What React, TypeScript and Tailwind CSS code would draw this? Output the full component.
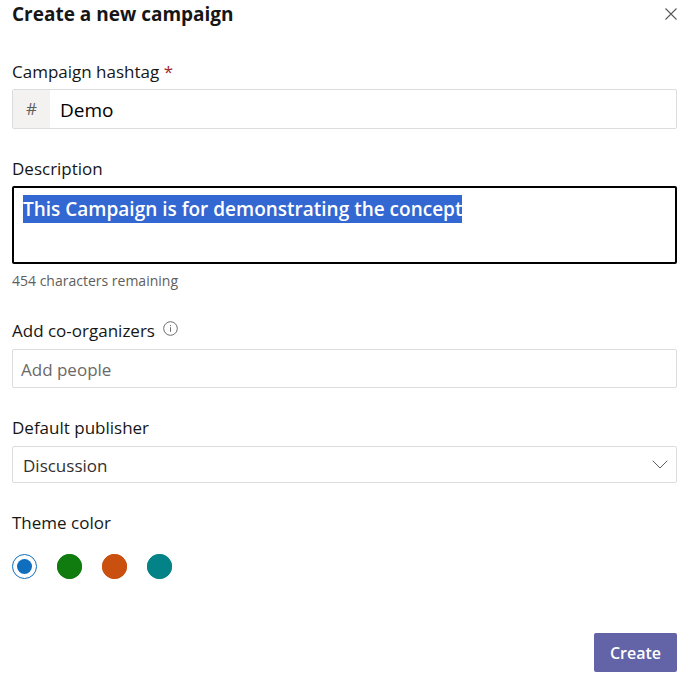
import { useEffect, useRef, useState } from "react";
import type { ReactNode } from "react";

const MAX_DESCRIPTION = 500;

const themes = [
  { name: "Blue", fill: "bg-[#106ebe]", ring: "border-[#106ebe]" },
  { name: "Green", fill: "bg-[#107c10]", ring: "border-[#107c10]" },
  { name: "Orange", fill: "bg-[#ca5010]", ring: "border-[#ca5010]" },
  { name: "Teal", fill: "bg-[#038387]", ring: "border-[#038387]" },
];

function Label({ htmlFor, children }: { htmlFor: string; children: ReactNode }) {
  return (
    <label htmlFor={htmlFor} className="text-[17px] leading-6 font-medium">
      {children}
    </label>
  );
}

export default function App() {
  const [hashtag, setHashtag] = useState("Demo");
  const [description, setDescription] = useState("This Campaign is for demonstrating the concept");
  const [theme, setTheme] = useState("Blue");
  const descriptionRef = useRef<HTMLTextAreaElement>(null);

  useEffect(() => {
    descriptionRef.current?.focus();
    descriptionRef.current?.select();
  }, []);

  return (
    <form
      className="bg-white pr-[18px] pb-4 pl-3 font-['Segoe_UI','Open_Sans',sans-serif] text-[#161616]"
      onSubmit={(e) => e.preventDefault()}
    >
      <header className="flex h-7 items-center justify-between">
        <h1 className="text-[19px] leading-7 font-bold">Create a new campaign</h1>
        <button type="button" aria-label="Close" className="text-[#5c5a58]">
          <svg width="12" height="12" viewBox="0 0 12 12" fill="none" stroke="currentColor" strokeWidth="1.1">
            <path d="M0.5 0.5 11.5 11.5M11.5 0.5 0.5 11.5" />
          </svg>
        </button>
      </header>

      <div className="mt-8 flex flex-col gap-7">
        <div className="flex flex-col gap-[5px]">
          <Label htmlFor="hashtag">
            Campaign hashtag <span className="text-[#a4262c]">*</span>
          </Label>
          <div className="flex h-10 overflow-hidden rounded-xs border border-[#dcdcdc]">
            <span className="flex w-[37px] items-center justify-center bg-[#f3f2f1] text-[17px] text-[#605e5c]">#</span>
            <input
              id="hashtag"
              required
              value={hashtag}
              onChange={(e) => setHashtag(e.target.value)}
              className="min-w-0 flex-1 px-[10px] pt-[2px] text-[19px] font-medium text-black outline-none"
            />
          </div>
        </div>

        <div className="flex flex-col gap-[5px]">
          <Label htmlFor="description">Description</Label>
          <textarea
            id="description"
            ref={descriptionRef}
            value={description}
            maxLength={MAX_DESCRIPTION}
            spellCheck={false}
            onChange={(e) => setDescription(e.target.value)}
            className="h-[78px] resize-none rounded-xs border-2 border-black px-[9px] py-[7px] text-[19px] leading-7 font-semibold outline-none selection:bg-[#3367d1] selection:text-white"
          />
          <p className="mt-[2px] text-[14px] leading-5 text-[#605e5c]">
            {MAX_DESCRIPTION - description.length} characters remaining
          </p>
        </div>

        <div className="flex flex-col gap-[6px]">
          <div className="flex gap-2">
            <Label htmlFor="people">Add co-organizers</Label>
            <svg
              width="15"
              height="15"
              viewBox="0 0 15 15"
              fill="none"
              stroke="#605e5c"
              className="mt-[2px]"
              aria-hidden="true"
            >
              <circle cx="7.5" cy="7.5" r="6.8" strokeWidth="0.9" />
              <path d="M7.5 6.2v4.6M7.5 4v1.1" strokeWidth="0.9" />
            </svg>
          </div>
          <input
            id="people"
            placeholder="Add people"
            className="h-[39px] rounded-xs border border-[#dcdcdc] px-2 pt-[2px] text-[17px] outline-none placeholder:text-[#6b6967]"
          />
        </div>

        <div className="flex flex-col gap-[6px]">
          <Label htmlFor="publisher">Default publisher</Label>
          <div className="grid items-center">
            <select
              id="publisher"
              className="col-start-1 row-start-1 h-[37px] w-full appearance-none rounded-xs border border-[#dcdcdc] bg-white px-[10px] pt-[2px] text-[17px] text-[#323130] outline-none"
            >
              <option>Discussion</option>
            </select>
            <svg
              width="16"
              height="9"
              viewBox="0 0 16 9"
              fill="none"
              stroke="#605e5c"
              className="pointer-events-none col-start-1 row-start-1 mr-[9px] justify-self-end"
              aria-hidden="true"
            >
              <path d="M0.7 0.7 8 8l7.3-7.3" />
            </svg>
          </div>
        </div>

        <fieldset>
          <legend className="text-[17px] leading-6 font-medium">Theme color</legend>
          <div className="mt-[19px] flex gap-5">
            {themes.map((t) => (
              <label key={t.name} className="grid size-[25px] cursor-pointer place-items-center">
                <input
                  type="radio"
                  name="theme"
                  aria-label={t.name}
                  checked={theme === t.name}
                  onChange={() => setTheme(t.name)}
                  className={`peer col-start-1 row-start-1 size-[25px] appearance-none rounded-full border bg-white ${t.ring}`}
                />
                <span
                  className={`col-start-1 row-start-1 size-[25px] rounded-full peer-checked:size-[15px] ${t.fill}`}
                />
              </label>
            ))}
          </div>
        </fieldset>
      </div>

      <footer className="mt-[54px] flex justify-end">
        <button type="submit" className="h-[39px] rounded-xs bg-[#6264a7] px-4 text-[16px] font-semibold text-white">
          Create
        </button>
      </footer>
    </form>
  );
}
